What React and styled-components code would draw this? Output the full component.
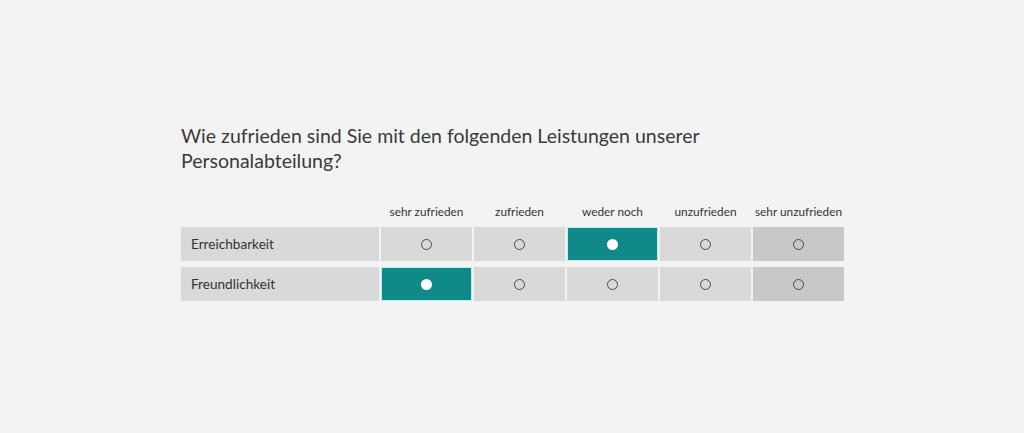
import React, { useState } from 'react';
import styled, { createGlobalStyle } from 'styled-components';

const GlobalStyle = createGlobalStyle`
  html, body {
    margin: 0;
    padding: 0;
    background: #f3f3f3;
  }
  body {
    font-family: Lato, "Open Sans", "Liberation Sans", sans-serif;
    color: #333;
  }
`;

const Page = styled.main`
  box-sizing: border-box;
  width: 1024px;
  height: 433px;
  padding: 123px 0 0 181px;
`;

const Question = styled.h1`
  margin: 0 0 29px 0;
  width: 560px;
  font-size: 19.5px;
  font-weight: 400;
  line-height: 25px;
  color: #3a3a3a;
`;

const Matrix = styled.div`
  display: grid;
  grid-template-columns: 198px repeat(5, 91px);
  grid-template-rows: 19px 34px 34px;
  column-gap: 2px;
  row-gap: 6px;
`;

const HeaderCell = styled.div`
  display: flex;
  align-items: center;
  justify-content: center;
  font-size: 11.8px;
  color: #333;
  white-space: nowrap;
`;

const LabelCell = styled.div`
  display: flex;
  align-items: center;
  padding-left: 10px;
  background: #d9d9d9;
  font-size: 13.6px;
  color: #333;
`;

const OptionCell = styled.button`
  display: flex;
  align-items: center;
  justify-content: center;
  box-sizing: border-box;
  margin: 0;
  padding: 0;
  border: 1px solid ${(p) => (p.selected ? '#bfeeee' : 'transparent')};
  background: ${(p) => (p.selected ? '#0f8a88' : p.last ? '#c8c8c8' : '#d9d9d9')};
  cursor: pointer;
`;

const Radio = styled.span`
  box-sizing: border-box;
  width: 11px;
  height: 11px;
  border-radius: 50%;
  border: ${(p) => (p.selected ? 'none' : '1.6px solid #4a4a4a')};
  background: ${(p) => (p.selected ? '#fff' : 'transparent')};
`;

const options = ['sehr zufrieden', 'zufrieden', 'weder noch', 'unzufrieden', 'sehr unzufrieden'];
const items = ['Erreichbarkeit', 'Freundlichkeit'];

export default function App() {
  const [answers, setAnswers] = useState({ Erreichbarkeit: 2, Freundlichkeit: 0 });

  return (
    <Page>
      <GlobalStyle />
      <Question>Wie zufrieden sind Sie mit den folgenden Leistungen unserer Personalabteilung?</Question>
      <Matrix>
        <div />
        {options.map((o) => (
          <HeaderCell key={o}>{o}</HeaderCell>
        ))}
        {items.map((item) => (
          <React.Fragment key={item}>
            <LabelCell>{item}</LabelCell>
            {options.map((o, i) => (
              <OptionCell
                key={o}
                selected={answers[item] === i}
                last={i === options.length - 1}
                onClick={() => setAnswers({ ...answers, [item]: i })}
              >
                <Radio selected={answers[item] === i} />
              </OptionCell>
            ))}
          </React.Fragment>
        ))}
      </Matrix>
    </Page>
  );
}
